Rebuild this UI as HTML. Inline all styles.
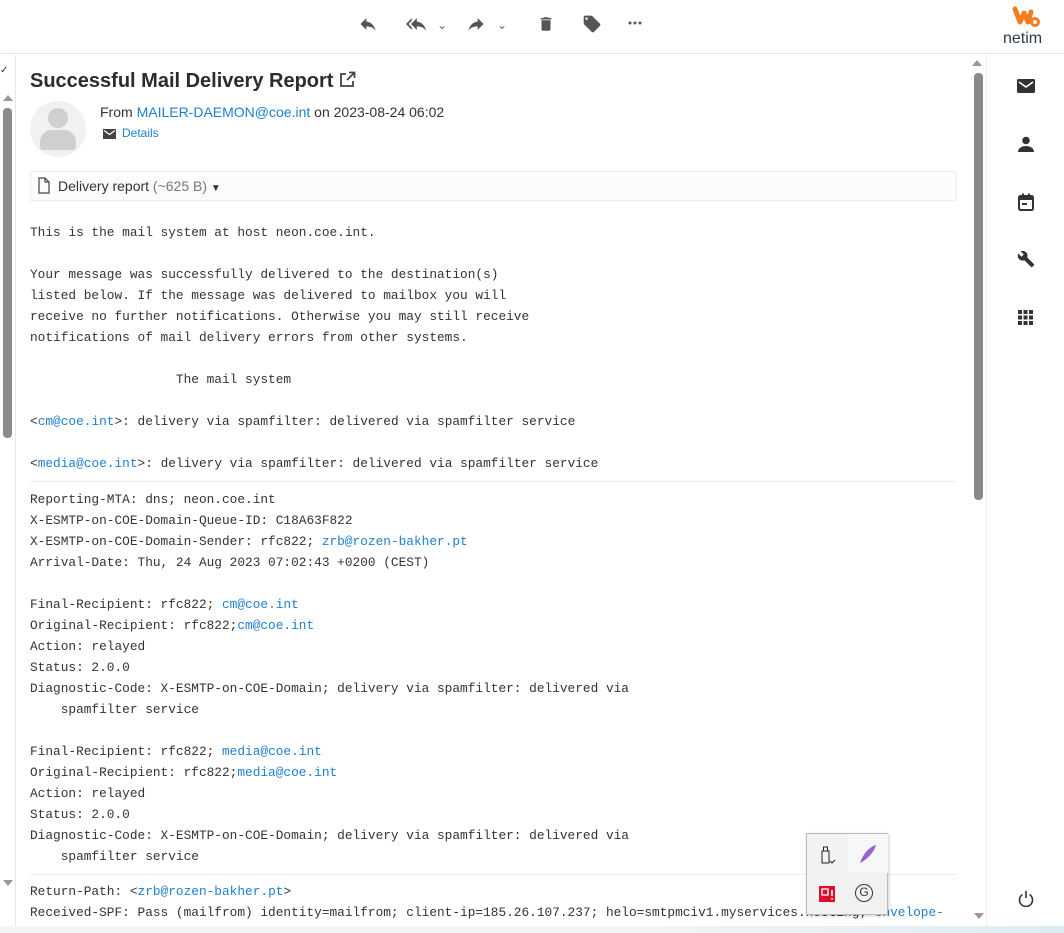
<!DOCTYPE html>
<html><head><meta charset="utf-8"><style>
*{margin:0;padding:0;box-sizing:border-box}
body{width:1064px;height:933px;overflow:hidden;background:#fff;font-family:"Liberation Sans",sans-serif;color:#333;position:relative}
.top{position:absolute;left:0;top:0;width:1064px;height:54px;border-bottom:1px solid #e6e6e6;background:#fff}
.ic{position:absolute;top:14px}
.left{position:absolute;left:0;top:55px;width:16px;height:878px;border-right:1px solid #e6e6e6}
.side{position:absolute;left:986px;top:55px;width:78px;height:878px;border-left:1px solid #eee}
pre{font-family:"Liberation Mono",monospace;font-size:12.8px;line-height:21px;color:#333;position:absolute;left:30px}
a{color:#1f7fcf;text-decoration:none}
.sep{position:absolute;left:30px;width:926px;height:1px;background:#eee}
</style></head><body>
<div class="top">
<svg class="ic" style="left:358px" width="20" height="20" viewBox="0 0 24 24"><path d="M10 9V5l-7 7 7 7v-4.1c5 0 8.5 1.6 11 5.1-1-5-4-10-11-11z" fill="#555"/></svg>
<svg class="ic" style="left:404px" width="24" height="20" viewBox="0 0 24 24"><path d="M7 8V5l-7 7 7 7v-3l-4-4 4-4zm6 1V5l-7 7 7 7v-4.1c5 0 8.5 1.6 11 5.1-1-5-4-10-11-11z" fill="#555"/></svg>
<span style="position:absolute;left:437px;top:18px;font-size:12px;color:#666">⌄</span>
<svg class="ic" style="left:466px" width="20" height="20" viewBox="0 0 24 24"><path d="M14 9V5l7 7-7 7v-4.1c-5 0-8.5 1.6-11 5.1 1-5 4-10 11-11z" fill="#555"/></svg>
<span style="position:absolute;left:497px;top:18px;font-size:12px;color:#666">⌄</span>
<svg class="ic" style="left:537px" width="18" height="20" viewBox="0 0 24 24"><path d="M6 19c0 1.1.9 2 2 2h8c1.1 0 2-.9 2-2V7H6v12zM19 4h-3.5l-1-1h-5l-1 1H5v2h14V4z" fill="#555"/></svg>
<svg class="ic" style="left:582px" width="20" height="20" viewBox="0 0 24 24"><path d="M21.4 11.6l-9-9C12.1 2.2 11.6 2 11 2H4c-1.1 0-2 .9-2 2v7c0 .6.2 1.1.6 1.4l9 9c.4.4.9.6 1.4.6s1-.2 1.4-.6l7-7c.4-.4.6-.9.6-1.4s-.2-1.1-.6-1.4zM5.5 7C4.7 7 4 6.3 4 5.5S4.7 4 5.5 4 7 4.7 7 5.5 6.3 7 5.5 7z" fill="#555"/></svg>
<svg style="position:absolute;left:628px;top:21px" width="14" height="4"><circle cx="2" cy="2" r="1.5" fill="#555"/><circle cx="7" cy="2" r="1.5" fill="#555"/><circle cx="12" cy="2" r="1.5" fill="#555"/></svg>
<svg style="position:absolute;left:1012px;top:6px" width="30" height="22" viewBox="0 0 30 22"><path d="M3 3 L8 16 L12 7 L16 16 L19 6" stroke="#f47c20" stroke-width="5" fill="none" stroke-linejoin="round" stroke-linecap="round"/><circle cx="23" cy="16" r="3.5" stroke="#f47c20" stroke-width="3" fill="none"/></svg>
<div style="position:absolute;left:1003px;top:30px;font-size:16px;color:#2a3a4a">netim</div>
</div>
<div class="left">
<div style="position:absolute;left:0;top:10px;font-size:10px;color:#333">✓</div>
<div style="position:absolute;left:3px;top:40px;width:0;height:0;border-left:5px solid transparent;border-right:5px solid transparent;border-bottom:6px solid #999"></div>
<div style="position:absolute;left:3px;top:53px;width:9px;height:330px;border-radius:4px;background:#8a8a8a"></div>
<div style="position:absolute;left:3px;top:825px;width:0;height:0;border-left:5px solid transparent;border-right:5px solid transparent;border-top:6px solid #999"></div>
</div>
<div style="position:absolute;left:972px;top:60px;width:0;height:0;border-left:5px solid transparent;border-right:5px solid transparent;border-bottom:6px solid #999"></div>
<div style="position:absolute;left:974px;top:73px;width:9px;height:427px;border-radius:4px;background:#8a8a8a"></div>
<div style="position:absolute;left:974px;top:913px;width:0;height:0;border-left:5px solid transparent;border-right:5px solid transparent;border-top:6px solid #999"></div>

<div style="position:absolute;left:30px;top:70px;font-size:20px;font-weight:bold;color:#2c2c2c">Successful Mail Delivery Report <svg width="17" height="17" viewBox="0 0 17 17" style="vertical-align:-1px"><path d="M7 3H2v12h12v-5" stroke="#444" stroke-width="1.8" fill="none"/><path d="M8 9l7-7M10 1.5h5.5V7" stroke="#444" stroke-width="1.8" fill="none"/></svg></div>
<div style="position:absolute;left:30px;top:101px;width:56px;height:56px;border-radius:50%;background:#f1f1f1;overflow:hidden">
<div style="position:absolute;left:18px;top:7px;width:20px;height:20px;border-radius:50%;background:#cfcfcf"></div>
<div style="position:absolute;left:10px;top:29px;width:36px;height:20px;border-radius:12px 12px 3px 3px;background:#cfcfcf"></div></div>
<div style="position:absolute;left:100px;top:104px;font-size:14px;color:#333">From <a>MAILER-DAEMON@coe.int</a> on 2023-08-24 06:02</div>
<svg style="position:absolute;left:103px;top:129px" width="13" height="10" viewBox="0 0 13 10"><rect width="13" height="10" fill="#444"/><path d="M1 1.5l5.5 4 5.5-4" stroke="#fff" stroke-width="1.2" fill="none"/></svg>
<div style="position:absolute;left:122px;top:126px;font-size:12px;color:#1f7fcf">Details</div>
<div style="position:absolute;left:30px;top:171px;width:927px;height:30px;border:1px solid #eee;background:#fcfcfc">
<svg style="position:absolute;left:7px;top:5px" width="12" height="17" viewBox="0 0 12 17"><path d="M1 1h6l4 4v11H1z M7 1v4h4" stroke="#444" fill="none" stroke-width="1.2"/></svg>
<span style="position:absolute;left:27px;top:6px;font-size:14px;color:#333">Delivery report <span style="color:#777">(~625 B)</span> <span style="font-size:10px">▼</span></span></div>

<pre style="top:222px">This is the mail system at host neon.coe.int.

Your message was successfully delivered to the destination(s)
listed below. If the message was delivered to mailbox you will
receive no further notifications. Otherwise you may still receive
notifications of mail delivery errors from other systems.

                   The mail system

&lt;<a>cm@coe.int</a>&gt;: delivery via spamfilter: delivered via spamfilter service

&lt;<a>media@coe.int</a>&gt;: delivery via spamfilter: delivered via spamfilter service</pre>
<div class="sep" style="top:481px"></div>
<pre style="top:489px">Reporting-MTA: dns; neon.coe.int
X-ESMTP-on-COE-Domain-Queue-ID: C18A63F822
X-ESMTP-on-COE-Domain-Sender: rfc822; <a>zrb@rozen-bakher.pt</a>
Arrival-Date: Thu, 24 Aug 2023 07:02:43 +0200 (CEST)

Final-Recipient: rfc822; <a>cm@coe.int</a>
Original-Recipient: rfc822;<a>cm@coe.int</a>
Action: relayed
Status: 2.0.0
Diagnostic-Code: X-ESMTP-on-COE-Domain; delivery via spamfilter: delivered via
    spamfilter service

Final-Recipient: rfc822; <a>media@coe.int</a>
Original-Recipient: rfc822;<a>media@coe.int</a>
Action: relayed
Status: 2.0.0
Diagnostic-Code: X-ESMTP-on-COE-Domain; delivery via spamfilter: delivered via
    spamfilter service</pre>
<div class="sep" style="top:874px"></div>
<pre style="top:881px">Return-Path: &lt;<a>zrb@rozen-bakher.pt</a>&gt;
Received-SPF: Pass (mailfrom) identity=mailfrom; client-ip=185.26.107.237; helo=smtpmciv1.myservices.hosting; <a>envelope-</a></pre>
<div style="position:absolute;left:0;top:926px;width:1064px;height:7px;background:linear-gradient(90deg,#f4f4f4 0,#f4f4f4 60%,#dcecf4 100%)"></div>

<div class="side">
<svg style="position:absolute;left:30px;top:23px" width="18" height="16" viewBox="0 0 18 14"><rect width="18" height="14" rx="1.5" fill="#333"/><path d="M2 3l7 5 7-5" stroke="#fff" stroke-width="1.6" fill="none"/></svg>
<svg style="position:absolute;left:31px;top:81px" width="16" height="16" viewBox="0 0 16 16"><circle cx="8" cy="4.5" r="3.8" fill="#333"/><path d="M0 16c0-4 4-6 8-6s8 2 8 6z" fill="#333"/></svg>
<svg style="position:absolute;left:31px;top:138px" width="16" height="18" viewBox="0 0 16 18"><rect x="1" y="3" width="14" height="14" rx="1.5" stroke="#333" stroke-width="2" fill="none"/><rect x="1" y="3" width="14" height="4" fill="#333"/><rect x="4" y="0.5" width="2" height="4" fill="#333"/><rect x="10" y="0.5" width="2" height="4" fill="#333"/><rect x="4" y="10" width="5" height="2" fill="#333"/></svg>
<svg style="position:absolute;left:30px;top:195px" width="18" height="18" viewBox="0 0 24 24"><path d="M22.7 19l-9.1-9.1c.9-2.3.4-5-1.5-6.9-2-2-5-2.4-7.4-1.3L9 6 6 9 1.6 4.7C.4 7.1.9 10.1 2.9 12.1c1.9 1.9 4.6 2.4 6.9 1.5l9.1 9.1c.4.4 1 .4 1.4 0l2.3-2.3c.5-.4.5-1.1.1-1.4z" fill="#333"/></svg>
<svg style="position:absolute;left:31px;top:255px" width="15" height="15" viewBox="0 0 15 15" fill="#333"><rect width="4" height="4"/><rect x="5.5" width="4" height="4"/><rect x="11" width="4" height="4"/><rect y="5.5" width="4" height="4"/><rect x="5.5" y="5.5" width="4" height="4"/><rect x="11" y="5.5" width="4" height="4"/><rect y="11" width="4" height="4"/><rect x="5.5" y="11" width="4" height="4"/><rect x="11" y="11" width="4" height="4"/></svg>
<svg style="position:absolute;left:31px;top:835px" width="16" height="17" viewBox="0 0 16 17"><path d="M4.5 4.5a6.5 6.5 0 1 0 7 0" stroke="#334" stroke-width="1.6" fill="none"/><path d="M8 1v7" stroke="#334" stroke-width="1.6"/></svg>
</div>

<div style="position:absolute;left:806px;top:833px;width:82px;height:82px;border:1px solid #bbb;background:#f2f2f2;box-shadow:1px 1px 3px rgba(0,0,0,.2)">
<div style="position:absolute;left:41px;top:0;width:40px;height:39px;background:#f7f7f7"></div>
<svg style="position:absolute;left:13px;top:12px" width="16" height="18" viewBox="0 0 16 18"><rect x="2" y="5" width="7" height="12" stroke="#222" fill="none"/><rect x="3.5" y="1" width="4" height="4" stroke="#222" fill="none"/><path d="M10 15l2 2 3-3" stroke="#222" fill="none"/></svg>
<svg style="position:absolute;left:52px;top:10px" width="18" height="20" viewBox="0 0 18 20"><path d="M1 19C4 10 10 3 17 1 15 8 9 15 1 19z" fill="#9a5fd0"/></svg>
<svg style="position:absolute;left:12px;top:52px" width="16" height="16" viewBox="0 0 16 16"><rect width="16" height="16" fill="#d80f2f"/><path d="M3 3h6v6H3z" stroke="#fff" stroke-width="1.3" fill="none"/><path d="M13 4v6M13 12v1.5" stroke="#fff" stroke-width="1.6"/></svg>
<div style="position:absolute;left:48px;top:50px;width:18px;height:18px;border:1.5px solid #333;border-radius:50%;font-size:12px;text-align:center;line-height:15px;color:#333">G</div>
</div>
</body></html>
